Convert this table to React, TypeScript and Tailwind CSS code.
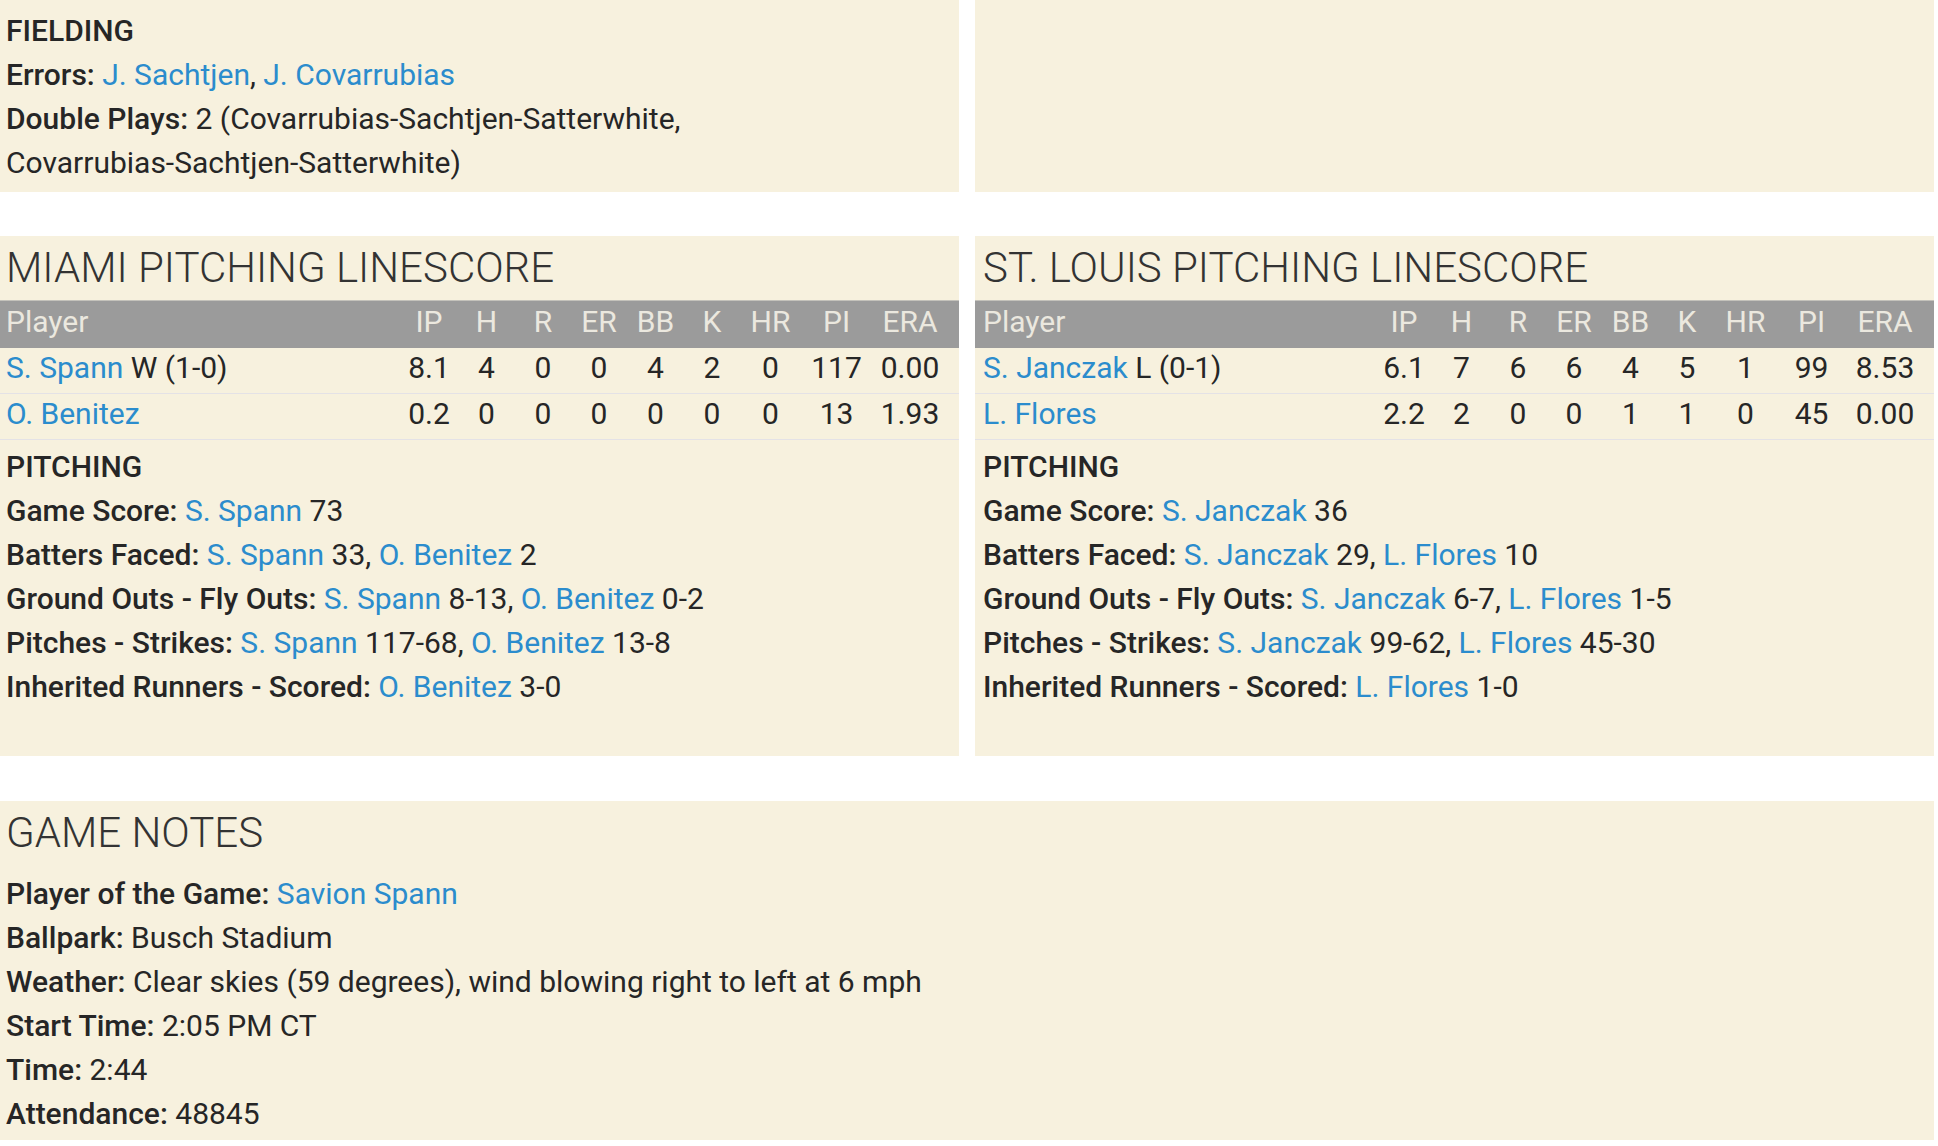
const Link = ({ children }: { children: React.ReactNode }) => (
  <span className="text-[#2b8ccd]">{children}</span>
);

const Line = ({ label, children }: { label: string; children?: React.ReactNode }) => (
  <div className="h-[44px] leading-[44px] whitespace-nowrap">
    <span className="font-medium">{label}</span> {children}
  </div>
);

type Pitcher = { name: string; dec?: string; stats: string[] };

const cols = ["IP", "H", "R", "ER", "BB", "K", "HR", "PI", "ERA"];
const colW = ["w-[58px]", "w-[57px]", "w-[56px]", "w-[56px]", "w-[57px]", "w-[56px]", "w-[61px]", "w-[71px]", "w-[87px]"];

const Linescore = ({ title, pitchers, notes, pad }: { title: string; pitchers: Pitcher[]; notes: React.ReactNode; pad: string }) => (
  <div className="bg-[#f7f1de] h-[520px]">
    <h2 className={`${pad} pt-[6px] mb-[6px] h-[58px] leading-[52px] text-[42px] font-light text-[#333]`}>{title}</h2>
    <table className="w-full table-fixed border-collapse leading-[36px]">
      <colgroup>
        <col />
        {colW.map((w, i) => (
          <col key={i} className={w} />
        ))}
      </colgroup>
      <thead>
        <tr className="bg-[#9b9b9b] text-[#ebe8df] h-[47px] border-t border-[#c4c2bb]">
          <th className={`${pad} p-0 pb-[5px] text-left font-normal`}>Player</th>
          {cols.map((c, i) => (
            <th key={c} className={`p-0 pb-[5px] font-normal text-center ${i === cols.length - 1 ? "pr-[11px]" : ""}`}>
              {c}
            </th>
          ))}
        </tr>
      </thead>
      <tbody>
        {pitchers.map((p) => (
          <tr key={p.name} className="h-[46px] border-b border-[#e4e2e6]">
            <td className={`${pad} pb-[5px] whitespace-nowrap`}>
              <Link>{p.name}</Link>
              {p.dec ? ` ${p.dec}` : ""}
            </td>
            {p.stats.map((s, i) => (
              <td key={i} className={`pb-[5px] text-center ${i === p.stats.length - 1 ? "pr-[11px]" : ""}`}>
                {s}
              </td>
            ))}
          </tr>
        ))}
      </tbody>
    </table>
    <div className={`${pad} pt-[5px]`}>
      <div className="h-[44px] leading-[44px] font-medium">PITCHING</div>
      {notes}
    </div>
  </div>
);

export default function App() {
  return (
    <div className="w-[1934px] bg-white font-[Roboto,sans-serif] text-[30px] text-[#262626]">
      {/* Fielding row */}
      <div className="grid grid-cols-2 gap-4">
        <div className="bg-[#f7f1de] h-[192px] px-[6px] pt-[9px]">
          <div className="h-[44px] leading-[44px] font-medium">FIELDING</div>
          <Line label="Errors:">
            <Link>J. Sachtjen</Link>, <Link>J. Covarrubias</Link>
          </Line>
          <Line label="Double Plays:">2 (Covarrubias-Sachtjen-Satterwhite,</Line>
          <div className="h-[44px] leading-[44px]">Covarrubias-Sachtjen-Satterwhite)</div>
        </div>
        <div className="bg-[#f7f1de] h-[192px]" />
      </div>

      {/* Pitching linescores */}
      <div className="grid grid-cols-2 gap-4 mt-[44px]">
        <Linescore
          title="MIAMI PITCHING LINESCORE"
          pad="pl-[6px]"
          pitchers={[
            { name: "S. Spann", dec: "W (1-0)", stats: ["8.1", "4", "0", "0", "4", "2", "0", "117", "0.00"] },
            { name: "O. Benitez", stats: ["0.2", "0", "0", "0", "0", "0", "0", "13", "1.93"] },
          ]}
          notes={
            <>
              <Line label="Game Score:">
                <Link>S. Spann</Link> 73
              </Line>
              <Line label="Batters Faced:">
                <Link>S. Spann</Link> 33, <Link>O. Benitez</Link> 2
              </Line>
              <Line label="Ground Outs - Fly Outs:">
                <Link>S. Spann</Link> 8-13, <Link>O. Benitez</Link> 0-2
              </Line>
              <Line label="Pitches - Strikes:">
                <Link>S. Spann</Link> 117-68, <Link>O. Benitez</Link> 13-8
              </Line>
              <Line label="Inherited Runners - Scored:">
                <Link>O. Benitez</Link> 3-0
              </Line>
            </>
          }
        />
        <Linescore
          title="ST. LOUIS PITCHING LINESCORE"
          pad="pl-[8px]"
          pitchers={[
            { name: "S. Janczak", dec: "L (0-1)", stats: ["6.1", "7", "6", "6", "4", "5", "1", "99", "8.53"] },
            { name: "L. Flores", stats: ["2.2", "2", "0", "0", "1", "1", "0", "45", "0.00"] },
          ]}
          notes={
            <>
              <Line label="Game Score:">
                <Link>S. Janczak</Link> 36
              </Line>
              <Line label="Batters Faced:">
                <Link>S. Janczak</Link> 29, <Link>L. Flores</Link> 10
              </Line>
              <Line label="Ground Outs - Fly Outs:">
                <Link>S. Janczak</Link> 6-7, <Link>L. Flores</Link> 1-5
              </Line>
              <Line label="Pitches - Strikes:">
                <Link>S. Janczak</Link> 99-62, <Link>L. Flores</Link> 45-30
              </Line>
              <Line label="Inherited Runners - Scored:">
                <Link>L. Flores</Link> 1-0
              </Line>
            </>
          }
        />
      </div>

      {/* Game notes */}
      <div className="bg-[#f7f1de] mt-[45px] h-[339px] px-[6px]">
        <h2 className="pt-[6px] mb-[13px] h-[58px] leading-[52px] text-[42px] font-light text-[#333]">GAME NOTES</h2>
        <Line label="Player of the Game:">
          <Link>Savion Spann</Link>
        </Line>
        <Line label="Ballpark:">Busch Stadium</Line>
        <Line label="Weather:">Clear skies (59 degrees), wind blowing right to left at 6 mph</Line>
        <Line label="Start Time:">2:05 PM CT</Line>
        <Line label="Time:">2:44</Line>
        <Line label="Attendance:">48845</Line>
      </div>
    </div>
  );
}
